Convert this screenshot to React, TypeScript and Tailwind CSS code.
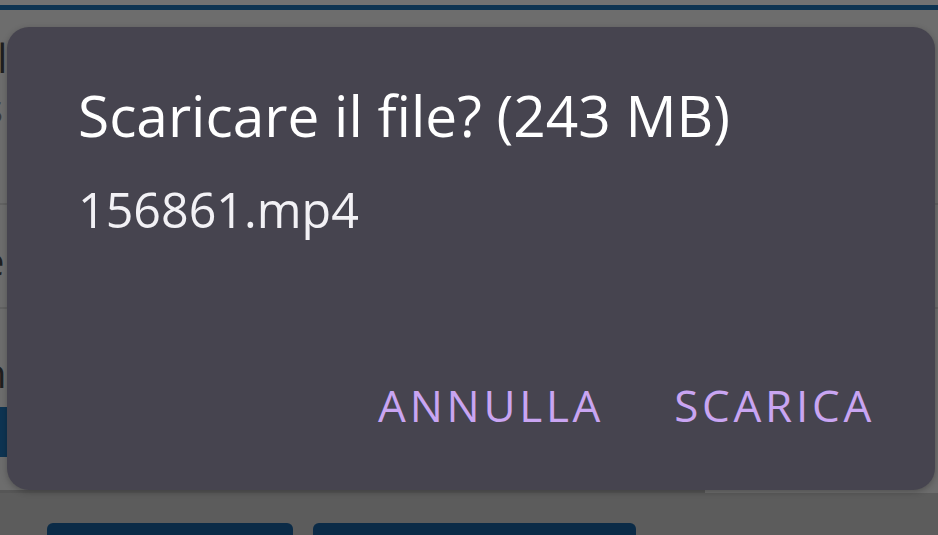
export default function App() {
  return (
    <div
      className="relative h-[535px] w-[938px] overflow-hidden bg-[#6d6d6d]"
      style={{ fontFamily: '"Open Sans", "Liberation Sans", sans-serif' }}
    >
      {/* dimmed page behind the dialog */}
      <div className="flex h-full flex-col">
        <div className="h-[5px] bg-[#727272]" />
        <div className="h-[5px] bg-[#0e3452]" />
        <div className="flex h-[480px] flex-col text-[40px] leading-none text-[#1f1f1f]">
          <div className="h-[195px] border-b-2 border-[#626262] pt-[28px]">
            <div className="-ml-[14px]">Il</div>
            <div className="-ml-[16px] mt-[10px] text-[#3a3a3a]">s</div>
            <div className="-ml-[16px] mt-[14px]">J</div>
          </div>
          <div className="h-[104px] border-b-2 border-[#626262] pt-[36px]">
            <div className="-ml-[18px]">e</div>
          </div>
          <div className="pt-[44px]">
            <div className="-ml-[18px]">n</div>
          </div>
          <div className="mt-[14px] h-[50px] w-[40px] bg-[#0e3452] p-[8px]">
            <div className="h-full w-[30px] rounded-sm bg-[#6b6b6b]" />
          </div>
        </div>
        <div className="h-[3px] w-[705px] bg-[#565656]" />
        <div className="flex flex-1 gap-[20px] bg-[#5c5c5c] pl-[47px] pt-[30px]">
          <div className="w-[246px] rounded-t-[6px] bg-[#0b2b47]" />
          <div className="w-[323px] rounded-t-[6px] bg-[#0b2b47]" />
        </div>
      </div>

      {/* dialog */}
      <div className="absolute left-[7px] top-[27px] flex h-[463px] w-[928px] flex-col rounded-[22px] bg-[#46444f] pl-[71px] pr-[60px] shadow-[0_2px_6px_rgba(0,0,0,0.25)]">
        <h1 className="mt-[60px] text-[56.8px] leading-none text-white">Scaricare il file? (243 MB)</h1>
        <p className="mt-[41px] text-[48.4px] leading-none text-[#f2f1f5]">156861.mp4</p>
        <div className="flex-1" />
        <div className="mb-[63px] flex justify-end gap-[70px] text-[44px] leading-none tracking-[0.085em] text-[#c9a5f2]">
          <button>ANNULLA</button>
          <button>SCARICA</button>
        </div>
      </div>
    </div>
  );
}
